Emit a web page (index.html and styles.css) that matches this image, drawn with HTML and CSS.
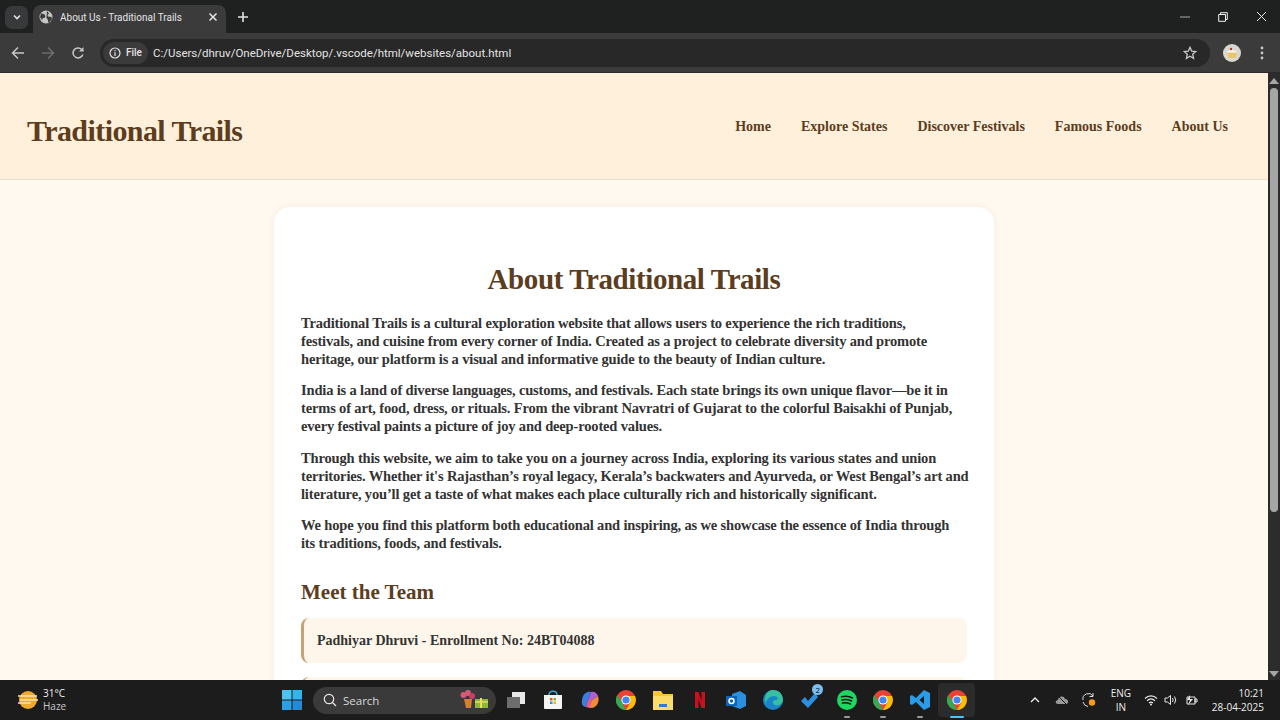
FILE: index.html
```html
<!DOCTYPE html>
<html lang="en">
<head>
    <meta charset="UTF-8">
    <title>About Us - Traditional Trails</title>
    <link rel="stylesheet" href="styles.css">
</head>
<body>
    <div class="tabstrip">
        <div class="tab-search">
            <svg width="10" height="10" viewBox="0 0 10 10"><path d="M2 3.500 5 6.500 8 3.500" fill="none" stroke="#e3e3e3" stroke-width="1.600"/></svg>
        </div>
        <div class="tab">
            <svg width="14" height="14" viewBox="0 0 14 14"><circle cx="7" cy="7" r="6.500" fill="#c4c7c5"/><path d="M2 3.500 5 4 6.500 6 5.500 8 4 8 3 10 1 7ZM8 1 10 3.500 8.500 5 9 6.500 12.500 7 13 9 10.500 12 9 12.500 9 10 7.500 8 8 1Z" fill="#3c3c3c"/></svg>
            <span class="tab-title">About Us - Traditional Trails</span>
            <svg width="10" height="10" viewBox="0 0 10 10"><path d="M1.500 1.500 8.500 8.500M8.500 1.500 1.500 8.500" stroke="#e8e8e8" stroke-width="1.500"/></svg>
        </div>
        <svg class="new-tab" width="12" height="12" viewBox="0 0 12 12"><path d="M6 1V11M1 6H11" stroke="#e3e3e3" stroke-width="1.600"/></svg>
        <div class="win-controls">
            <svg width="10" height="10" viewBox="0 0 10 10"><path d="M0 5H10" stroke="#a8a8a8" stroke-width="1"/></svg>
            <svg width="10" height="10" viewBox="0 0 10 10"><path d="M2.500 2V.7H9.300V7.500H8M.7 2.500H7.500V9.300H.7Z" fill="none" stroke="#f2f2f2" stroke-width="1"/></svg>
            <svg width="11" height="11" viewBox="0 0 11 11"><path d="M1 1 10 10M10 1 1 10" stroke="#e8e8e8" stroke-width="1"/></svg>
        </div>
    </div>

    <div class="toolbar">
        <svg class="nav-icon" width="14" height="14" viewBox="0 0 14 14"><path d="M13 7H2M7 1.500 1.500 7 7 12.500" fill="none" stroke="#c8c8c8" stroke-width="1.500"/></svg>
        <svg class="nav-icon" width="14" height="14" viewBox="0 0 14 14"><path d="M1 7H12M7 1.500 12.500 7 7 12.500" fill="none" stroke="#6e6e6e" stroke-width="1.500"/></svg>
        <svg class="nav-icon" width="14" height="14" viewBox="0 0 14 14"><path d="M11.800 8.500A5 5 0 1 1 10.500 3.300L12 5" fill="none" stroke="#c8c8c8" stroke-width="1.500"/><path d="M12.500 1V5.500H8Z" fill="#c8c8c8"/></svg>
        <div class="omnibox">
            <div class="site-chip">
                <svg width="12" height="12" viewBox="0 0 12 12"><circle cx="6" cy="6" r="5" fill="none" stroke="#e3e3e3" stroke-width="1.200"/><path d="M6 5.200V9M6 3V4.200" stroke="#e3e3e3" stroke-width="1.200"/></svg>
                <span>File</span>
            </div>
            <span class="url">C:/Users/dhruv/OneDrive/Desktop/.vscode/html/websites/about.html</span>
            <svg class="star" width="14" height="14" viewBox="0 0 14 14"><path d="M7 1.300 8.700 5.100 12.800 5.500 9.700 8.300 10.600 12.400 7 10.300 3.400 12.400 4.300 8.300 1.200 5.500 5.300 5.100Z" fill="none" stroke="#c8c8c8" stroke-width="1.300"/></svg>
        </div>
        <svg class="avatar" width="18" height="18" viewBox="0 0 18 18"><circle cx="9" cy="9" r="9" fill="#d8d8d3"/><path d="M4 8.500H14L12.500 14H5.500Z" fill="#eec468"/><path d="M3.800 8.500C4 5 14 5 14.200 8.500Z" fill="#f7f3e6"/><circle cx="8" cy="5" r="1.200" fill="#b5332e"/></svg>
        <svg class="menu-dots" width="4" height="14" viewBox="0 0 4 14"><circle cx="2" cy="2" r="1.400" fill="#c8c8c8"/><circle cx="2" cy="7" r="1.400" fill="#c8c8c8"/><circle cx="2" cy="12" r="1.400" fill="#c8c8c8"/></svg>
    </div>

    <div class="viewport">
        <div class="page">
            <header class="site-header">
                <div class="logo">Traditional Trails</div>
                <nav class="site-nav">
                    <a href="#">Home</a>
                    <a href="#">Explore States</a>
                    <a href="#">Discover Festivals</a>
                    <a href="#">Famous Foods</a>
                    <a href="#">About Us</a>
                </nav>
            </header>
            <main class="card">
                <h1>About Traditional Trails</h1>
                <p>Traditional Trails is a cultural exploration website that allows users to experience the rich traditions,<br>festivals, and cuisine from every corner of India. Created as a project to celebrate diversity and promote<br>heritage, our platform is a visual and informative guide to the beauty of Indian culture.</p>
                <p>India is a land of diverse languages, customs, and festivals. Each state brings its own unique flavor—be it in<br>terms of art, food, dress, or rituals. From the vibrant Navratri of Gujarat to the colorful Baisakhi of Punjab,<br>every festival paints a picture of joy and deep-rooted values.</p>
                <p>Through this website, we aim to take you on a journey across India, exploring its various states and union<br>territories. Whether it's Rajasthan’s royal legacy, Kerala’s backwaters and Ayurveda, or West Bengal’s art and<br>literature, you’ll get a taste of what makes each place culturally rich and historically significant.</p>
                <p>We hope you find this platform both educational and inspiring, as we showcase the essence of India through<br>its traditions, foods, and festivals.</p>
                <h2>Meet the Team</h2>
                <div class="member">Padhiyar Dhruvi - Enrollment No: 24BT04088</div>
                <div class="member">&nbsp;</div>
            </main>
        </div>
        <div class="scrollbar">
            <div class="arrow-up"></div>
            <div class="thumb"></div>
            <div class="arrow-down"></div>
        </div>
    </div>

    <footer class="taskbar">
        <div class="weather">
            <svg width="22" height="20" viewBox="0 0 22 20"><circle cx="11" cy="10" r="9" fill="#eeaa2e"/><path d="M1 6H20M3 10H21M1 13H14" stroke="#f7e3ae" stroke-width="1.500"/></svg>
            <div class="weather-text"><span>31°C</span><span class="muted">Haze</span></div>
        </div>
        <div class="task-center">
            <svg class="task-win" width="20" height="20" viewBox="0 0 20 20"><path d="M0 0H9.500V9.500H0Z" fill="#4cc2f1"/><path d="M10.500 0H20V9.500H10.500Z" fill="#36b2ec"/><path d="M0 10.500H9.500V20H0Z" fill="#2a9fe5"/><path d="M10.500 10.500H20V20H10.500Z" fill="#1f8bdc"/></svg>
            <div class="task-search">
                <svg width="14" height="14" viewBox="0 0 14 14"><circle cx="6" cy="6" r="4.700" fill="none" stroke="#e8e8e8" stroke-width="1.200"/><path d="M9.500 9.500 13 13" stroke="#e8e8e8" stroke-width="1.200"/></svg>
                <span>Search</span>
                <svg class="search-art" width="30" height="20" viewBox="0 0 30 20"><circle cx="3.500" cy="5" r="3" fill="#d65a78"/><circle cx="8" cy="3" r="3" fill="#d65a78"/><circle cx="12" cy="6" r="3" fill="#c9405f"/><path d="M4 9H12L11 18H6Z" fill="#d9802f"/><path d="M15 9H28V18H15Z" fill="#8cb73a"/><path d="M21 8V18" stroke="#e7dc62" stroke-width="2"/><path d="M15 12H28" stroke="#e7dc62" stroke-width="1.500"/></svg>
            </div>
            <div class="task-icons">
                <span class="task-icon"><svg width="20" height="18" viewBox="0 0 20 18"><path d="M6 1H19V13H6Z" fill="#e8e8e8"/><path d="M1 6H14V17H1Z" fill="#6d6d6d"/></svg></span>
                <span class="task-icon"><svg width="20" height="20" viewBox="0 0 20 20"><path d="M1 5H19V18Q19 19 18 19H2Q1 19 1 18Z" fill="#f4f4f4"/><path d="M6 5C6 0 14 0 14 5" fill="none" stroke="#3aa7d8" stroke-width="1.500"/><path d="M7 8H9.500V10.500H7Z" fill="#e8502a"/><path d="M10.500 8H13V10.500H10.500Z" fill="#7ab92f"/><path d="M7 11.500H9.500V14H7Z" fill="#1f9de0"/><path d="M10.500 11.500H13V14H10.500Z" fill="#f3b51b"/></svg></span>
                <span class="task-icon"><svg width="20" height="20" viewBox="0 0 20 20"><path d="M2 10C3 2 9 1 11 2L8 10 6 17C3 17 1 14 2 10Z" fill="#3a7fe0"/><path d="M11 2C14 1 17 3 18 6L12 10 8 10Z" fill="#b05ed8"/><path d="M18 6C20 11 17 18 11 18L8 17 12 10Z" fill="#f08a3c"/><path d="M8 10H12L10 18 6 17Z" fill="#e85c8c"/></svg></span>
                <span class="task-icon"><svg width="20" height="20" viewBox="0 0 20 20"><use href="#chrome"/></svg></span>
                <span class="task-icon"><svg width="20" height="19" viewBox="0 0 20 19"><path d="M0 0H8L10 3H20V19H0Z" fill="#f7c92f"/><path d="M0 5H20V19H0Z" fill="#fbdc68"/><path d="M6 13H14V16H6Z" fill="#2b7fd0"/></svg></span>
                <span class="task-icon"><svg width="10" height="16" viewBox="0 0 10 16"><path d="M0 0H3.500L6.500 9V0H10V16H6.500L3.500 7V16H0Z" fill="#c9111d"/></svg></span>
                <span class="task-icon"><svg width="20" height="18" viewBox="0 0 20 18"><path d="M6 3 14 0 20 4V15L14 18 6 15Z" fill="#2a8fdc"/><path d="M0 5H11V15H0Z" fill="#0f65b5"/><circle cx="5.500" cy="10" r="2.500" fill="none" stroke="#fff" stroke-width="1.500"/></svg></span>
                <span class="task-icon"><svg width="20" height="20" viewBox="0 0 20 20"><circle cx="10" cy="10" r="10" fill="#1a86c9"/><path d="M20 10C20 14 15 16 12 15 9 14 9 10 13 10 16 10 15 6 11 6 6 6 3 10 3 14 0 8 4 0 10 0 16 0 20 4 20 10Z" fill="#35c1a0"/></svg></span>
                <span class="task-icon"><svg width="20" height="18" viewBox="0 0 20 18"><path d="M1 10 5 6 8 10 15 2 18 6 8 17Z" fill="#2e8fe0"/></svg><span class="count-badge">2</span></span>
                <span class="task-icon running"><svg width="20" height="20" viewBox="0 0 20 20"><circle cx="10" cy="10" r="10" fill="#1ed760"/><path d="M4.500 6.800C8 5.800 12 6 15.500 8M5 10C8 9.200 11.500 9.500 14.500 11M5.500 13C8 12.500 10.800 12.700 13.500 14" fill="none" stroke="#121212" stroke-width="1.500" stroke-linecap="round"/></svg></span>
                <span class="task-icon running"><svg width="20" height="20" viewBox="0 0 20 20"><use href="#chrome"/></svg></span>
                <span class="task-icon running"><svg width="20" height="20" viewBox="0 0 20 20"><path d="M14 0 20 3V17L14 20 6 12 2 15 0 14V6L2 5 6 8ZM14 6 9.500 10 14 14Z" fill="#2a9be6"/></svg></span>
                <span class="task-icon active"><svg width="20" height="20" viewBox="0 0 20 20"><use href="#chrome"/></svg></span>
            </div>
        </div>
        <div class="tray">
            <svg class="tray-caret" width="10" height="6" viewBox="0 0 10 6"><path d="M1 5 5 1 9 5" fill="none" stroke="#f0f0f0" stroke-width="1.300"/></svg>
            <svg class="tray-cloud" width="14" height="12" viewBox="0 0 14 12"><path d="M3 10C0 10 0 6 3 6 3 2 9 1 10 5 14 5 14 10 11 10Z" fill="#9a9a9a"/><path d="M2 1 12 11" stroke="#1c1c1c" stroke-width="1"/></svg>
            <svg class="tray-sync" width="16" height="16" viewBox="0 0 16 16"><path d="M2 8A5.500 5.500 0 0 1 12 4M12 1V4.500H8.500M2 10Q3 14 7 14.500" fill="none" stroke="#dcdcdc" stroke-width="1"/><circle cx="11" cy="10.500" r="3.200" fill="#f79a1c"/></svg>
            <div class="lang"><span>ENG</span><span>IN</span></div>
            <div class="tray-status">
                <svg width="14" height="12" viewBox="0 0 14 12"><path d="M1 4.500C4.500 1 9.500 1 13 4.500M3 6.800C5.500 4.500 8.500 4.500 11 6.800M5 9C6.200 8 7.800 8 9 9" fill="none" stroke="#e8e8e8" stroke-width="1.200"/><circle cx="7" cy="10.600" r="1" fill="#e8e8e8"/></svg>
                <svg width="14" height="12" viewBox="0 0 14 12"><path d="M1 4H3.500L6.500 1.500V10.500L3.500 8H1Z" fill="none" stroke="#e8e8e8" stroke-width="1"/><path d="M8.500 4Q9.800 6 8.500 8M10.500 2.500Q13 6 10.500 9.500" fill="none" stroke="#e8e8e8" stroke-width="1"/></svg>
                <svg width="14" height="12" viewBox="0 0 14 12"><path d="M3 3H11V10H3ZM11 5H13V8H11Z" fill="none" stroke="#e8e8e8" stroke-width="1"/><path d="M6 1 3 6H6L4 11 9 5H6Z" fill="#e8e8e8"/></svg>
            </div>
            <div class="clock"><span>10:21</span><span>28-04-2025</span></div>
        </div>
    </footer>

    <svg class="defs" width="0" height="0">
        <defs>
            <g id="chrome">
                <circle cx="10" cy="10" r="10" fill="#ea4335"/>
                <path d="M10 20A10 10 0 0 1 1.300 5L6 12 10 20Z" fill="#34a853"/>
                <path d="M10 20 14 13 10 6H19A10 10 0 0 1 10 20Z" fill="#fbbc04"/>
                <circle cx="10" cy="10" r="4.600" fill="#fff"/>
                <circle cx="10" cy="10" r="3.600" fill="#4285f4"/>
            </g>
        </defs>
    </svg>
</body>
</html>
```
FILE: styles.css
```css
* {
    box-sizing: border-box;
}

html,
body {
    margin: 0;
    height: 100%;
    overflow: hidden;
}

body {
    display: flex;
    flex-direction: column;
    font-family: "Liberation Serif", serif;
    background-color: #fff9f0;
}

svg {
    display: block;
    flex-shrink: 0;
}

.defs {
    position: absolute;
}

/* browser chrome */
.tabstrip {
    height: 33px;
    display: flex;
    align-items: center;
    padding: 5px 0 0 5px;
    background-color: #1f2020;
    font-family: Roboto, sans-serif;
    color: #e3e3e3;
}

.tab-search {
    width: 23px;
    height: 23px;
    margin-bottom: 4px;
    display: flex;
    align-items: center;
    justify-content: center;
    border-radius: 7px;
    background-color: #38393b;
}

.tab {
    width: 193px;
    height: 28px;
    margin-left: 5px;
    padding: 0 8px 4px 6px;
    display: flex;
    align-items: center;
    gap: 7px;
    border-radius: 8px 8px 0 0;
    background-color: #3b3b3b;
    font-size: 10px;
}

.tab-title {
    flex: 1;
    white-space: nowrap;
}

.new-tab {
    margin: 0 0 4px 11px;
}

.win-controls {
    margin-left: auto;
    margin-bottom: 5px;
    display: flex;
    align-items: center;
    gap: 28px;
    padding-right: 13.500px;
}

.toolbar {
    height: 40px;
    display: flex;
    align-items: center;
    padding: 0 16px 0 11px;
    background-color: #3b3b3b;
    border-bottom: 1px solid #2a2a2a;
}

.nav-icon {
    margin-right: 16px;
}

.omnibox {
    flex: 1;
    height: 28px;
    margin-left: -1px;
    padding: 0 13px 0 3px;
    display: flex;
    align-items: center;
    border-radius: 14px;
    background-color: #282828;
    font-family: Roboto, sans-serif;
    color: #e3e3e3;
}

.site-chip {
    height: 22px;
    padding: 0 6px;
    display: flex;
    align-items: center;
    gap: 5px;
    border-radius: 11px;
    background-color: #3b3b3b;
    font-size: 10px;
    font-weight: 500;
}

.url {
    margin-left: 5px;
    font-size: 11.500px;
}

.star {
    margin-left: auto;
}

.avatar {
    margin-left: 13px;
}

.menu-dots {
    margin-left: 19px;
}

/* page area */
.viewport {
    flex: 1;
    min-height: 0;
    display: flex;
}

.page {
    flex: 1;
    min-width: 0;
    overflow: hidden;
}

.site-header {
    height: 107px;
    padding: 0 40px 0 27px;
    display: flex;
    align-items: center;
    justify-content: space-between;
    background-color: #fff0db;
    border-bottom: 1px solid #eadfcf;
}

.logo {
    margin-top: 10px;
    font-size: 30px;
    font-weight: 700;
    letter-spacing: -0.580px;
    color: #5c3d1e;
}

.site-nav {
    display: flex;
    gap: 30px;
    margin-top: 2px;
}

.site-nav a {
    font-size: 14px;
    font-weight: 700;
    color: #5c3d1e;
    text-decoration: none;
}

.card {
    width: 720px;
    margin: 27px auto 0;
    padding: 50px 27px 0;
    border-radius: 16px;
    background-color: #fff;
    box-shadow: 0 0 10px rgba(0, 0, 0, 0.06);
}

h1 {
    margin: 0 0 13px;
    text-align: center;
    font-size: 29px;
    letter-spacing: -0.400px;
    line-height: 44px;
    color: #5c3d1e;
}

.card p {
    margin: 0 0 13.330px;
    font-size: 14.500px;
    font-weight: 700;
    letter-spacing: -0.160px;
    line-height: 18px;
    white-space: nowrap;
    color: #333;
}

h2 {
    margin: 25.200px 0 11px;
    font-size: 21px;
    line-height: 30px;
    color: #5c3d1e;
}

.member {
    height: 45px;
    margin-bottom: 14px;
    padding: 0 13px;
    display: flex;
    align-items: center;
    border-left: 3px solid #c8a272;
    border-radius: 8px;
    background-color: #fef6ea;
    font-size: 14px;
    font-weight: 700;
    color: #333;
}

.scrollbar {
    width: 12px;
    display: flex;
    flex-direction: column;
    align-items: center;
    background-color: #2c2c2c;
}

.arrow-up,
.arrow-down {
    width: 0;
    height: 0;
    border-left: 5px solid transparent;
    border-right: 5px solid transparent;
}

.arrow-up {
    margin: 5px 0 4px;
    border-bottom: 6px solid #a5a5a5;
}

.arrow-down {
    margin: auto 0 3px;
    border-top: 6px solid #a5a5a5;
}

.thumb {
    width: 8px;
    height: 424px;
    border-radius: 4px;
    background-color: #a5a5a5;
}

/* windows taskbar */
.taskbar {
    height: 40px;
    display: flex;
    align-items: center;
    background-color: #1c1c1c;
    font-family: "Open Sans", sans-serif;
    color: #eee;
}

.weather {
    width: 282px;
    padding-left: 17px;
    display: flex;
    align-items: center;
    gap: 4px;
    font-size: 10px;
    line-height: 13px;
}

.weather-text {
    display: flex;
    flex-direction: column;
}

.muted {
    color: #c8c8c8;
}

.task-center {
    display: flex;
    align-items: center;
}

.task-win {
    margin-right: 11px;
}

.task-search {
    width: 183px;
    height: 27px;
    padding: 0 6px 0 10px;
    display: flex;
    align-items: center;
    gap: 6px;
    border-radius: 14px;
    background-color: #3a3a3a;
    font-size: 11.500px;
    color: #d8d8d8;
}

.search-art {
    margin-left: auto;
}

.task-icons {
    margin-left: 2px;
    display: flex;
}

.task-icon {
    width: 36.700px;
    height: 34px;
    display: flex;
    align-items: center;
    justify-content: center;
    position: relative;
    border-radius: 4px;
}

.running::after,
.active::after {
    content: "";
    position: absolute;
    bottom: -1px;
    left: 50%;
    width: 6px;
    height: 2px;
    margin-left: -3px;
    border-radius: 1px;
    background-color: #9a9a9a;
}

.active {
    background-color: #2b2b2b;
}

.active::after {
    width: 14px;
    margin-left: -7px;
    background-color: #4cc2ff;
}

.count-badge {
    position: absolute;
    top: 1px;
    right: 5px;
    width: 11px;
    height: 11px;
    border-radius: 50%;
    background-color: #7cc0f0;
    color: #101010;
    font-size: 8px;
    line-height: 11px;
    text-align: center;
}

.tray {
    margin-left: auto;
    padding-right: 16px;
    display: flex;
    align-items: center;
}

.tray-caret {
    margin-right: 15px;
}

.tray-cloud {
    margin-right: 12px;
}

.tray-sync {
    margin-right: 13px;
}

.lang {
    width: 22px;
    margin-right: 12px;
    display: flex;
    flex-direction: column;
    align-items: center;
    font-size: 10px;
    line-height: 14px;
}

.tray-status {
    display: flex;
    gap: 6px;
    margin-right: 14px;
}

.clock {
    display: flex;
    flex-direction: column;
    align-items: flex-end;
    font-size: 10px;
    line-height: 14px;
}
```
